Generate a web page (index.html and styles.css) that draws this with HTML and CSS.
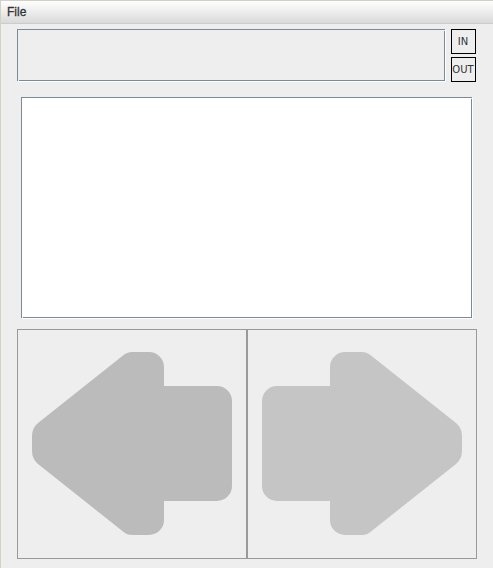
FILE: index.html
```html
<!DOCTYPE html>
<html lang="en">
<head>
<meta charset="utf-8">
<title>File</title>
<link rel="stylesheet" href="styles.css">
</head>
<body>
<div class="window">
  <nav class="menubar"><span class="menu">File</span></nav>
  <main class="content">
    <div class="top">
      <div class="field etched"></div>
      <div class="zoom">
        <button class="small">IN</button>
        <button class="small">OUT</button>
      </div>
    </div>
    <div class="text etched"></div>
    <div class="arrows">
      <button class="arrow previous" aria-label="Previous">
        <svg width="228" height="228" viewBox="0 0 228 228"><path d="M20 93L105 25.500Q109 22 114 22H131A15 15 0 0 1 146 37V56H199A15 15 0 0 1 214 71V156A15 15 0 0 1 199 171H146V190A15 15 0 0 1 131 205H114Q109 205 105 201.500L20 134Q14 129 14 121V106Q14 98 20 93Z"/></svg>
      </button>
      <button class="arrow next" aria-label="Next">
        <svg width="228" height="228" viewBox="0 0 228 228"><path d="M208 93L123 25.500Q119 22 114 22H97A15 15 0 0 0 82 37V56H29A15 15 0 0 0 14 71V156A15 15 0 0 0 29 171H82V190A15 15 0 0 0 97 205H114Q119 205 123 201.500L208 134Q214 129 214 121V106Q214 98 208 93Z"/></svg>
      </button>
    </div>
  </main>
</div>
</body>
</html>
```
FILE: styles.css
```css
* { box-sizing: border-box; }
body { margin: 0; background: #eee; font-family: "Liberation Sans", sans-serif; }
button { margin: 0; padding: 0; background: #eee; border-radius: 0; font-family: inherit; }
.window {
  width: 493px;
  height: 568px;
  overflow: hidden;
  border-left: 1px solid #d4d0c8;
  border-top: 1px solid #d4d0c8;
}
.menubar {
  height: 23px;
  padding-left: 6px;
  border-bottom: 1px solid #ccc;
  background: linear-gradient(#fff, #dadada);
}
.menu { display: block; font-size: 12px; line-height: 22px; color: #333; -webkit-text-stroke: 0.3px #333; }
.content { padding: 5px 16px 0; }
.top { display: flex; gap: 6px; }
.field { width: 428px; height: 52px; }
.etched { position: relative; border: 1px solid #7a8a99; box-shadow: 1px 1px 0 #fff; }
.etched::before, .etched::after { content: ""; position: absolute; width: 1px; height: 1px; background: #eee; }
.etched::before { left: 0; bottom: -1px; }
.etched::after { right: -1px; top: 0; }
.zoom { display: flex; flex-direction: column; gap: 3px; }
.small {
  width: 25px;
  height: 25px;
  padding-right: 1px;
  border: 1px solid #000;
  font-family: "DejaVu Sans", sans-serif;
  font-size: 10px;
  line-height: 23px;
  color: #333;
  white-space: nowrap;
}
.text { width: 451px; height: 221px; margin: 15px 0 11px 4px; background: #fff; }
.arrows { display: flex; }
.arrow { width: 230px; height: 230px; border: 1px solid #999; }
.arrow svg { display: block; }
.previous { fill: #bbb; }
.next { fill: #c5c5c5; }
```
